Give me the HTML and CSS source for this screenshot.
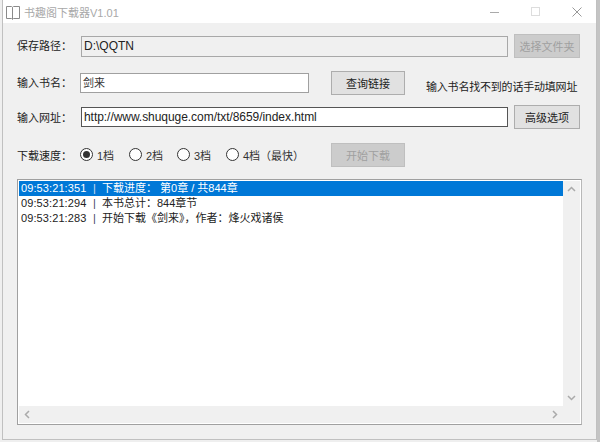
FILE: index.html
```html
<!DOCTYPE html>
<html lang="zh">
<head>
<meta charset="utf-8">
<title>书趣阁下载器V1.01</title>
<link rel="stylesheet" href="styles.css">
</head>
<body>
<div class="window">
  <div class="titlebar">
    <svg class="app-icon" width="16" height="16" viewBox="0 0 16 16"><path d="M1.500 2.500h5l1 .8 1-.8h6v12h-6l-1 .8-1-.8h-5zM7.500 3.300v12" fill="none" stroke="#8a8a8a" stroke-width="1"/></svg>
    <span class="title">书趣阁下载器V1.01</span>
    <div class="controls">
      <svg width="10" height="10" viewBox="0 0 10 10"><path d="M0 5.500h9" stroke="#aaa" fill="none"/></svg>
      <svg width="10" height="10" viewBox="0 0 10 10"><rect x=".5" y=".5" width="8" height="8" fill="none" stroke="#ddd"/></svg>
      <svg width="10" height="10" viewBox="0 0 10 10"><path d="M.5.500l9 9M9.500.500l-9 9" stroke="#999" fill="none"/></svg>
    </div>
  </div>
  <div class="content">
    <div class="row row-path">
      <label class="label">保存路径：</label>
      <div class="input input-disabled">D:\QQTN</div>
      <button class="btn btn-disabled btn-side">选择文件夹</button>
    </div>
    <div class="row row-name">
      <label class="label label-name">输入书名：</label>
      <div class="input input-name">剑来</div>
      <button class="btn btn-query">查询链接</button>
      <span class="note">输入书名找不到的话手动填网址</span>
    </div>
    <div class="row row-url">
      <label class="label">输入网址：</label>
      <div class="input input-focus">http://www.shuquge.com/txt/8659/index.html</div>
      <button class="btn btn-side">高级选项</button>
    </div>
    <div class="row row-speed">
      <label class="label label-speed">下载速度：</label>
      <span class="radio radio-on"><i></i>1档</span>
      <span class="radio radio-third"><i></i>2档</span>
      <span class="radio"><i></i>3档</span>
      <span class="radio radio-last"><i></i>4档（最快）</span>
      <button class="btn btn-disabled btn-start">开始下载</button>
    </div>
    <div class="listbox">
      <div class="list-main">
        <div class="items">
          <div class="item item-selected"><span class="time">09:53:21:351</span><span class="sep">|</span><span>下载进度： 第0章 / 共844章</span></div>
          <div class="item"><span class="time">09:53:21:294</span><span class="sep">|</span><span>本书总计：844章节</span></div>
          <div class="item"><span class="time">09:53:21:283</span><span class="sep">|</span><span>开始下载《剑来》，作者：烽火戏诸侯</span></div>
        </div>
        <div class="vscroll">
          <svg width="9" height="6" viewBox="0 0 9 6"><path d="M1 5l3.500-3.500L8 5" fill="none" stroke="#aaa" stroke-width="1.500"/></svg>
          <svg width="9" height="6" viewBox="0 0 9 6"><path d="M1 1l3.500 3.500L8 1" fill="none" stroke="#aaa" stroke-width="1.500"/></svg>
        </div>
      </div>
      <div class="hscroll">
        <svg width="6" height="9" viewBox="0 0 6 9"><path d="M5 1L1.500 4.500 5 8" fill="none" stroke="#aaa" stroke-width="1.500"/></svg>
        <svg width="6" height="9" viewBox="0 0 6 9"><path d="M1 1l3.500 3.500L1 8" fill="none" stroke="#aaa" stroke-width="1.500"/></svg>
      </div>
    </div>
  </div>
</div>
</body>
</html>
```
FILE: styles.css
```css
* { box-sizing: border-box; }
html, body { margin: 0; padding: 0; }
body {
  width: 600px;
  height: 442px;
  background: linear-gradient(to right, #efefef 597px, #c4c4c4 597px);
  font-family: "Liberation Sans", "Noto Sans CJK SC", sans-serif;
  font-size: 11px;
  color: #222;
  overflow: hidden;
  padding: 0 3px 2px 2px;
}
.window {
  height: 440px;
  background: #f0f0f0;
  border: 1px solid #c0c0c0;
  border-width: 0 1px 1px 1px;
  display: flex;
  flex-direction: column;
}
.titlebar {
  height: 23px;
  background: #fff;
  display: flex;
  align-items: center;
  padding-left: 2px;
  flex: none;
}
.app-icon { flex: none; }
.title { margin-left: 3px; color: #a8a8a8; font-size: 11px; }
.controls {
  margin-left: auto;
  display: flex;
  padding-right: 14px;
  gap: 31px;
}
.content { flex: 1; padding: 11px 0 0 14px; display: flex; flex-direction: column; }
.row { display: flex; align-items: center; }
.row-path { height: 24px; }
.row-name { height: 24px; margin-top: 13px; }
.row-url { height: 24px; margin-top: 10px; }
.row-speed { height: 24px; margin-top: 14px; }
.label { width: 64px; flex: none; color: #222; margin-top: -3px; }
.label-name { width: 63px; margin-top: -2px; }
.label-speed { width: 63px; margin-top: -1px; }
.row-url .label { margin-top: 0; }
.input {
  width: 427px;
  height: 20px;
  line-height: 18px;
  border: 1px solid #7a7a7a;
  background: #fff;
  padding-left: 2px;
  color: #222;
  font-size: 12px;
  flex: none;
}
.input-disabled { background: #f0f0f0; border-color: #a8a8a8; height: 21px; }
.input-name { width: 229px; border-color: #a0a0a0; color: #333; font-size: 11px; }
.input-focus { border-color: #555; letter-spacing: -.05px; }
.btn {
  font: inherit;
  font-size: 11px;
  height: 24px;
  border: 1px solid #adadad;
  background: #e1e1e1;
  color: #222;
  padding: 0;
  flex: none;
}
.btn-side { width: 66px; margin-left: 6px; }
.btn-query { width: 74px; margin-left: 22px; }
.btn-start { width: 74px; }
.btn-disabled { background: #cccccc; border-color: #bfbfbf; color: #a0a0a0; }
.note { margin-left: 21px; margin-top: 5px; color: #222; letter-spacing: -.2px; }
.radio { display: flex; align-items: center; width: 49px; color: #333; margin-top: -1px; }
.radio-third { width: 48px; }
.radio-last { width: 105px; }
.radio i {
  width: 13px;
  height: 13px;
  border: 1px solid #333;
  border-radius: 50%;
  background: #fff;
  margin-right: 4px;
  flex: none;
  display: flex;
  align-items: center;
  justify-content: center;
}
.radio-on i::after {
  content: "";
  width: 7px;
  height: 7px;
  border-radius: 50%;
  background: #333;
}
.listbox {
  width: 565px;
  height: 246px;
  margin-top: 12px;
  border: 1px solid #a0a0a0;
  border-right-color: #b8b8b8;
  padding: 1px;
  background: #fff;
  display: flex;
  flex-direction: column;
}
.list-main { flex: 1; display: flex; min-height: 0; }
.items { flex: 1; font-size: 11px; }
.item { height: 15px; line-height: 15px; padding-left: 2px; display: flex; color: #222; white-space: pre; }
.item-selected { background: #0078d7; color: #fff; }
.time { width: 65px; letter-spacing: .1px; }
.sep { width: 16px; padding-left: 7px; color: #446; }
.item-selected .sep { color: #cde; }
.vscroll {
  width: 17px;
  background: #f0f0f0;
  display: flex;
  flex-direction: column;
  justify-content: space-between;
  align-items: center;
  padding: 5px 0;
}
.hscroll {
  height: 17px;
  flex: none;
  background: #f0f0f0;
  display: flex;
  justify-content: space-between;
  align-items: center;
  padding: 0 22px 0 5px;
}
```
